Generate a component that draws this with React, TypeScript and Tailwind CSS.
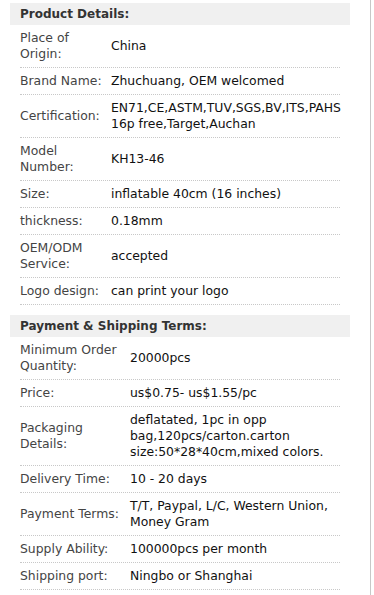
type Row = { label: string; value: string[] };

const productDetails: Row[] = [
  { label: 'Place of Origin:', value: ['China'] },
  { label: 'Brand Name:', value: ['Zhuchuang, OEM welcomed'] },
  { label: 'Certification:', value: ['EN71,CE,ASTM,TUV,SGS,BV,ITS,PAHS', '16p free,Target,Auchan'] },
  { label: 'Model Number:', value: ['KH13-46'] },
  { label: 'Size:', value: ['inflatable 40cm (16 inches)'] },
  { label: 'thickness:', value: ['0.18mm'] },
  { label: 'OEM/ODM Service:', value: ['accepted'] },
  { label: 'Logo design:', value: ['can print your logo'] },
];

const paymentTerms: Row[] = [
  { label: 'Minimum Order Quantity:', value: ['20000pcs'] },
  { label: 'Price:', value: ['us$0.75- us$1.55/pc'] },
  { label: 'Packaging Details:', value: ['deflatated, 1pc in opp', 'bag,120pcs/carton.carton', 'size:50*28*40cm,mixed colors.'] },
  { label: 'Delivery Time:', value: ['10 - 20 days'] },
  { label: 'Payment Terms:', value: ['T/T, Paypal, L/C, Western Union,', 'Money Gram'] },
  { label: 'Supply Ability:', value: ['100000pcs per month'] },
  { label: 'Shipping port:', value: ['Ningbo or Shanghai'] },
];

function Section({ title, rows, labelWidth }: { title: string; rows: Row[]; labelWidth: string }) {
  return (
    <div>
      <div className="bg-[#f0f0f0] px-[10px] h-[22px] flex items-center text-[12px] font-bold text-[#333]">
        {title}
      </div>
      <div className="px-[10px]">
        {rows.map((row) => (
          <div
            key={row.label}
            className="flex items-center py-[5px] border-b border-dotted border-[#c8c8c8] leading-[16px] text-[12.4px]"
          >
            <div className={`${labelWidth} shrink-0 pr-1 text-[#444]`}>{row.label}</div>
            <div className="text-[#111]">
              {row.value.map((line) => (
                <div key={line}>{line}</div>
              ))}
            </div>
          </div>
        ))}
      </div>
    </div>
  );
}

export default function App() {
  return (
    <div className="w-[374px] h-[595px] bg-white overflow-hidden" style={{ fontFamily: '"DejaVu Sans", Verdana, sans-serif' }}>
      <div className="w-[371px] h-full border-r border-[#c8c8c8] pt-[3px]">
        <div className="w-[340px] ml-[10px] flex flex-col gap-[10px]">
          <Section title="Product Details:" rows={productDetails} labelWidth="w-[91px]" />
          <Section title="Payment & Shipping Terms:" rows={paymentTerms} labelWidth="w-[110px]" />
        </div>
      </div>
    </div>
  );
}
